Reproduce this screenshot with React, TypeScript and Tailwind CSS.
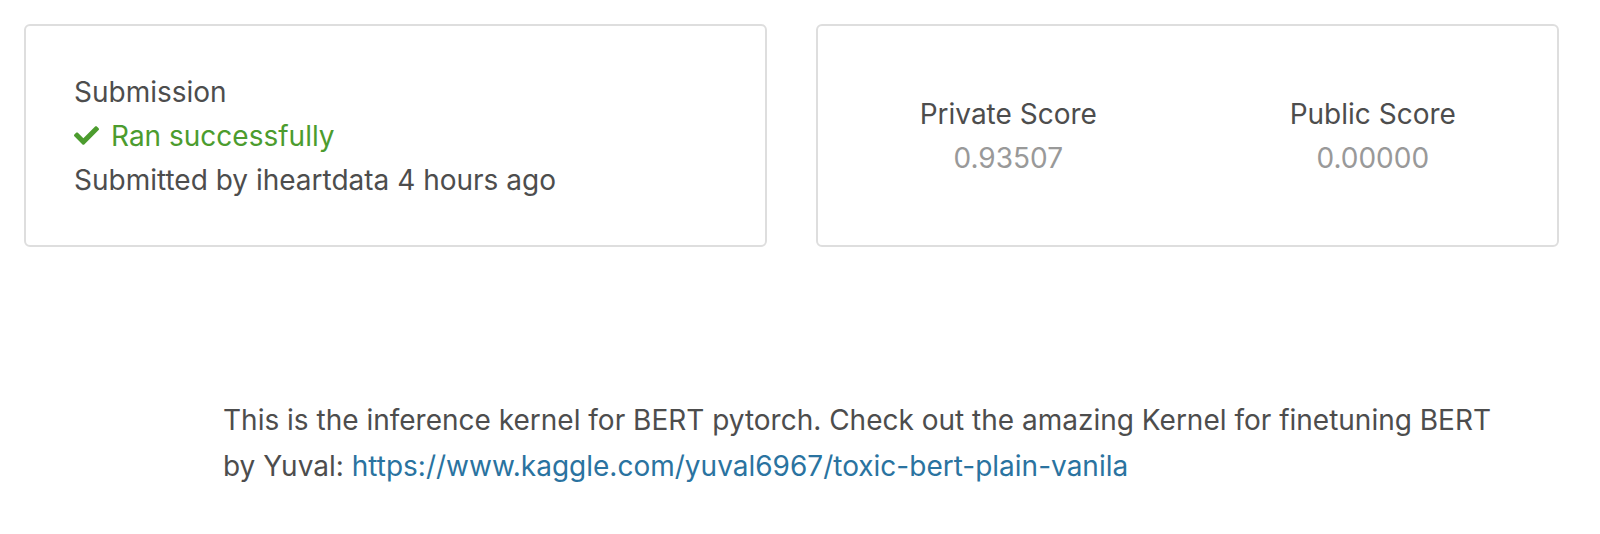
import React from 'react';
import { FaCheck } from 'react-icons/fa';

const SubmissionCard = () => {
    return (
        <div className="flex h-[223px] w-[743px] flex-col justify-center rounded-md border-2 border-[#dedede] px-[48px]">
            <div className="text-[#4d4d4d]">Submission</div>
            <div className="flex items-center gap-[12px] text-[#4c9c2e]">
                <FaCheck className="h-[25px] w-[25px]" />
                <span>Ran successfully</span>
            </div>
            <div className="text-[#4d4d4d]">Submitted by iheartdata 4 hours ago</div>
        </div>
    );
};

const ScoreColumn = ({ label, value }: { label: string; value: string }) => {
    return (
        <div className="flex flex-1 flex-col items-center">
            <div className="text-[#4d4d4d]">{label}</div>
            <div className="text-[#999999]">{value}</div>
        </div>
    );
};

const ScoreCard = () => {
    return (
        <div className="flex h-[223px] w-[743px] items-center rounded-md border-2 border-[#dedede] pl-[8px] pr-[2px]">
            <ScoreColumn label="Private Score" value="0.93507" />
            <ScoreColumn label="Public Score" value="0.00000" />
        </div>
    );
};

export default function App() {
    return (
        <div className="min-h-[534px] bg-white font-['Inter',sans-serif] text-[28px] leading-[44px]">
            <div className="flex gap-[49px] pl-[24px] pt-[24px]">
                <SubmissionCard />
                <ScoreCard />
            </div>
            <p className="ml-[223px] mt-[150px] w-[1285px] leading-[46px] text-[#4d4d4d]">
                This is the inference kernel for BERT pytorch. Check out the amazing Kernel for finetuning BERT by Yuval:{' '}
                <a href="#" className="text-[#2a73a0]">
                    https://www.kaggle.com/yuval6967/toxic-bert-plain-vanila
                </a>
            </p>
        </div>
    );
}
